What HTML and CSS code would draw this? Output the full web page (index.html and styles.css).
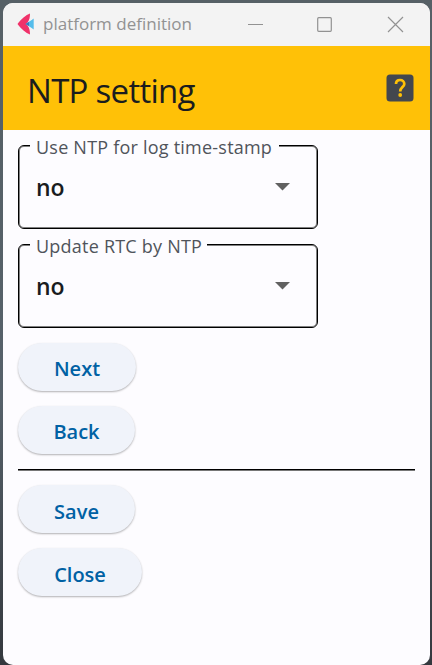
FILE: index.html
```html
<!DOCTYPE html>
<html lang="en">
<head>
<meta charset="utf-8">
<title>platform definition</title>
<link rel="stylesheet" href="styles.css">
</head>
<body>
<div class="window">
  <header class="titlebar">
    <svg class="logo" width="18" height="22" viewBox="0 0 18 22"><path d="M13 0.500C9 2 4 6 0.500 11C4 16 9 20 13 21.500C13 18 12.500 15 10.500 12.500V9.500C12.500 7 13 4 13 0.500Z" fill="#f0326a"/><path d="M16.700 5.500V16.500C14 14.500 11.500 13 8.500 11C11.500 9 14 7.500 16.700 5.500Z" fill="#55bdeb"/><path d="M12 9V13L8.500 11Z" fill="#3a78b5"/></svg>
    <span class="caption">platform definition</span>
    <svg class="controls" width="156" height="18" viewBox="0 0 156 18" fill="none" stroke="#929292" stroke-width="1.200"><path d="M0 9.500H15"/><rect x="69.700" y="2.700" width="13.600" height="13.600" rx="1"/><path d="M140 2L155 17M155 2L140 17"/></svg>
  </header>
  <div class="appbar">
    <h1>NTP setting</h1>
    <svg class="help" width="28" height="28" viewBox="0 0 28 28"><rect x="0.500" y="0.500" width="27" height="27" rx="3.500" fill="#43474e"/><path d="M10 10C10 7.500 11.700 6 14.100 6S18.300 7.700 18.300 9.900C18.300 13 14.200 13.300 14.200 17.500" fill="none" stroke="#ffc107" stroke-width="2.700"/><circle cx="14.200" cy="21" r="1.900" fill="#ffc107"/></svg>
  </div>
  <main>
    <fieldset class="field">
      <legend><span class="label label-log">Use NTP for log time-stamp</span></legend>
      <div class="select"><span>no</span><svg width="15" height="8" viewBox="0 0 15 8"><path d="M0 0H15L7.500 7.500Z" fill="#616161"/></svg></div>
    </fieldset>
    <fieldset class="field">
      <legend><span class="label label-rtc">Update RTC by NTP</span></legend>
      <div class="select"><span>no</span><svg width="15" height="8" viewBox="0 0 15 8"><path d="M0 0H15L7.500 7.500Z" fill="#616161"/></svg></div>
    </fieldset>
    <button class="btn next">Next</button>
    <button class="btn back">Back</button>
    <div class="divider"></div>
    <button class="btn save">Save</button>
    <button class="btn close">Close</button>
  </main>
</div>
</body>
</html>
```
FILE: styles.css
```css
* { box-sizing: border-box; }
body {
  margin: 0;
  height: 665px;
  padding: 3px 2px 0 3px;
  overflow: hidden;
  background: linear-gradient(#566066, #56616a 60%, #34383e);
  font-family: "Open Sans", "Noto Sans", sans-serif;
}
.window {
  height: 662px;
  border-radius: 10px;
  overflow: hidden;
  background: #fdfcff;
}
.titlebar {
  display: flex;
  align-items: center;
  height: 43px;
  padding: 0 26px 2px 14px;
  background: #f3f3f3;
}
.caption {
  width: 160px;
  margin-left: 8px;
  color: #929292;
  font-size: 17px;
  line-height: 24px;
  white-space: nowrap;
}
.controls { margin-left: auto; }
.appbar {
  display: flex;
  align-items: center;
  justify-content: space-between;
  height: 84px;
  padding: 0 16px 0 24px;
  background: #ffc107;
}
h1 {
  margin: 5px 0 0;
  color: #1a1c1e;
  font-size: 33px;
  font-weight: 400;
  letter-spacing: -0.72px;
  line-height: 44px;
  white-space: nowrap;
}
main {
  display: flex;
  flex-direction: column;
  align-items: flex-start;
  padding: 5px 15px 0;
}
.field {
  width: 300px;
  height: 94px;
  margin: 0 0 5px;
  padding: 0 27px 0 17px;
  border: 1px solid #000;
  border-radius: 6px;
  box-shadow: inset 0 0 0 1px #808080;
}
.field legend {
  margin-left: -6px;
  padding: 0 6px;
  height: 21px;
  background: #fdfcff;
}
.label {
  display: block;
  color: #50545b;
  font-size: 18px;
  font-weight: 400;
  letter-spacing: 0.22px;
  line-height: 24px;
  white-space: nowrap;
}
.label-log { width: 237px; }
.label-rtc { width: 165px; }
.select {
  display: flex;
  align-items: center;
  justify-content: space-between;
  height: 40px;
  margin-top: 11px;
  color: #1a1c1e;
  font-size: 23px;
  font-weight: 600;
}
.btn {
  height: 48px;
  margin: 0 0 15px;
  padding: 3px 0 0;
  border: 0;
  border-radius: 24px;
  background: #f0f3fa;
  box-shadow: 0 1px 2px #0000004d;
  color: #0061a4;
  font: 600 20px/28px "Open Sans", "Noto Sans", sans-serif;
}
.next { width: 118px; margin-top: 10px; }
.back { width: 117px; }
.save { width: 117px; padding-top: 5px; }
.close { width: 124px; padding-top: 5px; }
.divider {
  width: 397px;
  height: 2px;
  margin-bottom: 14px;
  border-top: 1px solid #000;
  background: #777;
}
```
